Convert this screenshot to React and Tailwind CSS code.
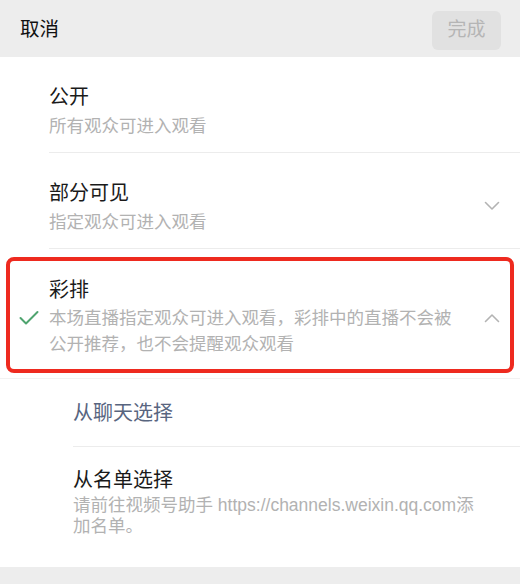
import React from 'react';

const font = { fontFamily: '"Liberation Sans", "Noto Sans CJK SC", sans-serif' };

const Chevron = ({ up }) => (
  <svg width="16" height="10" viewBox="0 0 16 10" className={up ? 'rotate-180' : ''}>
    <polyline points="1.5,1.5 8,8 14.5,1.5" fill="none" stroke="#b3b3b3" strokeWidth="1.6" strokeLinecap="round" strokeLinejoin="round" />
  </svg>
);

const Check = () => (
  <svg width="20" height="16" viewBox="0 0 20 16">
    <polyline points="1.5,8 7,13.5 18.5,2" fill="none" stroke="#4fa46f" strokeWidth="2" strokeLinecap="round" strokeLinejoin="round" />
  </svg>
);

const App = () => {
  return (
    <div className="h-screen bg-[#ededed] flex flex-col" style={font}>
      {/* top bar */}
      <div className="h-[57px] flex items-center justify-between pt-[3px] pl-5 pr-[19px]">
        <span className="text-[19.5px] text-[#111]">取消</span>
        <button className="w-[69px] h-[39px] rounded-[6px] bg-[#e1e1e1] text-[19px] text-[#b5b5b5]">完成</button>
      </div>

      <div className="bg-white h-[510px] flex flex-col">
        {/* 公开 */}
        <div className="ml-[49px] border-b border-[#ececec] pt-[24px] pb-[13px] pr-5">
          <div className="text-[20px] leading-[32px] text-[#1a1a1a]">公开</div>
          <div className="text-[17.5px] leading-[26px] text-[#b2b2b2]">所有观众可进入观看</div>
        </div>

        {/* 部分可见 */}
        <div className="ml-[49px] border-b border-[#ececec] pt-[24px] pb-[13px] pr-[20px] flex items-center justify-between">
          <div>
            <div className="text-[20px] leading-[32px] text-[#1a1a1a]">部分可见</div>
            <div className="text-[17.5px] leading-[26px] text-[#b2b2b2]">指定观众可进入观看</div>
          </div>
          <Chevron />
        </div>

        {/* 彩排 (selected) */}
        <div className="relative flex items-center border-b border-[#f2f2f2] pt-[25px] pb-[21px] pr-[20px]">
          <div className="w-[49px] flex justify-center pl-[8px] pt-[4px]">
            <Check />
          </div>
          <div className="w-[410px]">
            <div className="text-[20px] leading-[32px] text-[#1a1a1a]">彩排</div>
            <div className="text-[17.5px] leading-[25.5px] text-[#b2b2b2]">
              本场直播指定观众可进入观看，彩排中的直播不会被公开推荐，也不会提醒观众观看
            </div>
          </div>
          <div className="ml-auto pt-[4px]">
            <Chevron up />
          </div>
          <div className="absolute left-[6px] right-[6px] top-[8px] bottom-[5px] border-[4px] border-[#ee2a1f] rounded-[8px] pointer-events-none" />
        </div>

        {/* sub options */}
        <div className="ml-[73px] h-[68px] flex items-center border-b border-[#ececec]">
          <span className="text-[20px] text-[#58657f]">从聊天选择</span>
        </div>
        <div className="ml-[73px] pt-[18px]">
          <div className="text-[20px] leading-[30px] text-[#1a1a1a]">从名单选择</div>
          <div className="w-[410px] text-[17.5px] leading-[21px] text-[#b2b2b2]">
            请前往视频号助手 https://channels.weixin.qq.com添加名单。
          </div>
        </div>
      </div>
    </div>
  );
};

export default App;
